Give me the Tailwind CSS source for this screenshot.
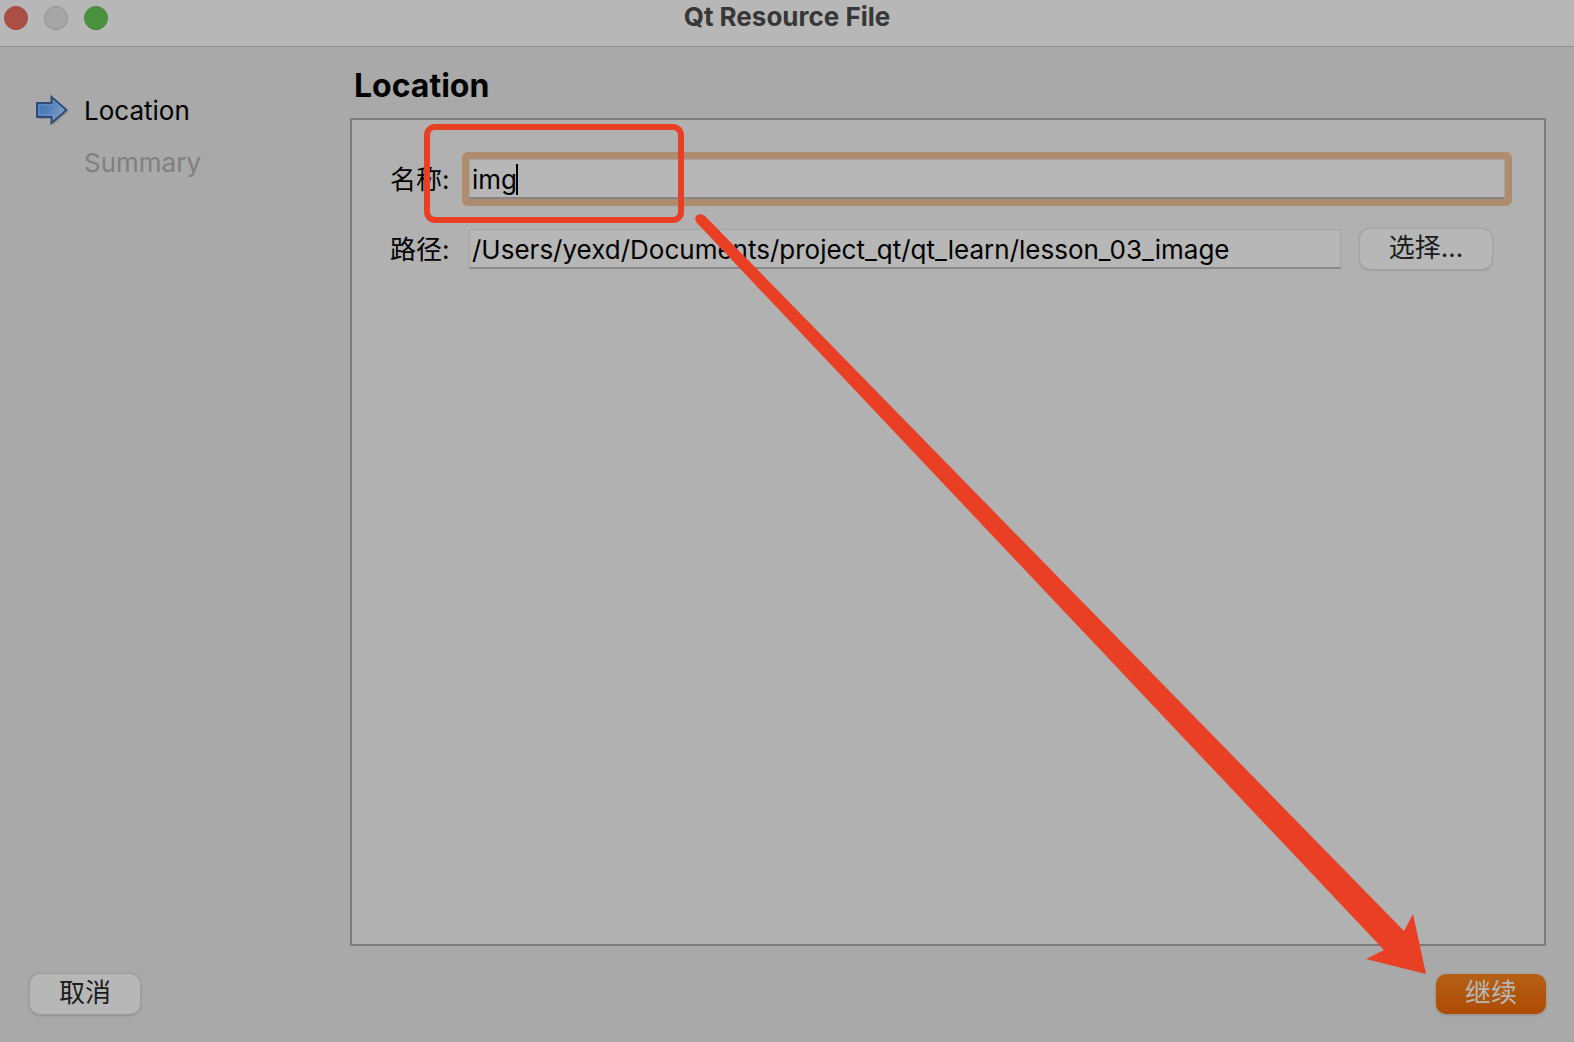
<!DOCTYPE html>
<html lang="zh-CN">
<head>
<meta charset="utf-8">
<title>Qt Resource File</title>
<script src="https://cdn.jsdelivr.net/npm/@tailwindcss/browser@4"></script>
</head>
<body class="relative flex min-h-screen flex-col bg-[#a9a9a9] font-['Inter','Noto_Sans_CJK_SC',sans-serif] text-[26px] leading-8 text-black">

<header class="grid h-[47px] shrink-0 grid-cols-[1fr_auto_1fr] border-b border-[#909090] bg-[#b7b7b7]">
  <div class="flex gap-4 pt-1.5 pl-1">
    <button aria-label="Close" class="size-6 rounded-full border border-[#a2463e] bg-[#ac4e46]"></button>
    <button aria-label="Minimize" disabled class="size-6 rounded-full border border-[#929292] bg-[#a6a6a6]"></button>
    <button aria-label="Zoom" class="size-6 rounded-full border border-[#45873a] bg-[#4a913e]"></button>
  </div>
  <h1 class="pt-px font-bold text-[#373737]">Qt Resource File</h1>
</header>

<main class="flex grow">
  <nav class="w-[350px] shrink-0 pt-12 pl-9">
    <ol class="flex flex-col gap-5">
      <li class="flex items-center gap-4" aria-current="step">
        <svg class="h-8 w-8 shrink-0 overflow-visible" viewBox="0 0 32 32" aria-hidden="true">
          <defs>
            <linearGradient id="arrowFill" x1="0" y1="0" x2="1" y2="0.5">
              <stop offset="0" stop-color="#3b70b5"/><stop offset="0.5" stop-color="#517fbb"/><stop offset="1" stop-color="#7e9fc9"/>
            </linearGradient>
          </defs>
          <path d="M2 10H16V4L32 17L17 30V24H2Z" fill="#000" opacity=".15"/>
          <path d="M1 8H15.500V2L30.500 15L15.500 28V22H1Z" fill="url(#arrowFill)" stroke="#2e4c76" stroke-width="2"/>
          <path d="M3 10H17.500V5.500L28 15L17.500 24.500V20H3Z" fill="none" stroke="#8ba8cc" stroke-width="1" opacity=".5"/>
        </svg>
        <span>Location</span>
      </li>
      <li class="pl-12 text-[#808080]">Summary</li>
    </ol>
  </nav>

  <section class="flex grow flex-col pr-7">
    <h2 class="pt-5 pb-[13px] pl-1 text-[32px] leading-[38px] font-bold">Location</h2>
    <form class="grow border-2 border-[#7c7c7c] bg-[#b1b1b1] pt-8 pr-8 pl-[38px]">
      <div class="flex h-[54px] items-center">
        <div class="relative w-[72px] shrink-0 pt-0.5">
          <label for="name">名称:</label>
          <div class="pointer-events-none absolute -top-[38px] left-[34px] z-10 h-[99px] w-[260px] rounded-[11px] border-6 border-[#e83f25]"></div>
        </div>
        <div class="relative grow rounded-md bg-[#b08c6e] p-[7px]">
          <input id="name" type="text" value="img" class="block h-10 w-full border border-b-2 border-[#a4a4a4] border-b-[#858585] bg-[#b7b7b7] px-0.5 pt-0.5 caret-transparent outline-none">
          <span class="absolute top-3 left-[54px] h-[31px] w-0.5 bg-black"></span>
        </div>
      </div>
      <div class="mt-[23px] mr-5 flex items-center">
        <label for="path" class="w-[79px] shrink-0 pt-0.5">路径:</label>
        <input id="path" type="text" value="/Users/yexd/Documents/project_qt/qt_learn/lesson_03_image" class="h-10 min-w-0 grow border border-b-2 border-[#a4a4a4] border-b-[#8a8a8a] bg-[#b7b7b7] px-0.5 pt-0.5 outline-none">
        <button type="button" class="ml-[19px] h-10 w-[132px] rounded-[10px] bg-[#b7b7b7] pb-0.5 text-[#1c1c1c] shadow-[0_0_1px_1px_#a2a2a2,0_1px_2px_#777]">选择...</button>
      </div>
    </form>
  </section>
</main>

<footer class="flex justify-between px-7 pt-7 pb-7">
  <button class="ml-0.5 h-10 w-[110px] rounded-[10px] bg-[#b7b7b7] pb-0.5 text-[#1c1c1c] shadow-[0_0_1px_1px_#9d9d9d,0_1px_3px_#777]">取消</button>
  <button class="h-10 w-[110px] rounded-[10px] bg-linear-to-b from-[#b56117] to-[#ad4b00] pb-0.5 text-[#b7b7b7] shadow-[0_1px_3px_#8f8780]">继续</button>
</footer>

<svg class="pointer-events-none absolute inset-0 z-20 h-full w-full" viewBox="0 0 1574 1042" preserveAspectRatio="none" aria-hidden="true">
  <path d="M697 223C692 217 699 211 705 216L1404 931L1413 914L1426 974L1366 959L1384 950Z" fill="#e83f25"/>
</svg>
</body>
</html>
